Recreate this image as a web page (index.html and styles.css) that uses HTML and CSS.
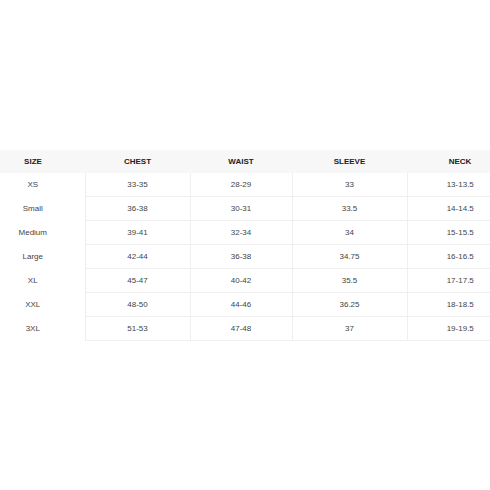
FILE: index.html
```html
<!DOCTYPE html>
<html lang="en">
<head>
<meta charset="utf-8">
<title>Size Chart</title>
<link rel="stylesheet" href="styles.css">
</head>
<body>
<div class="chart">
  <table class="sizes">
    <colgroup>
      <col class="c-size"><col class="c-chest"><col class="c-waist"><col class="c-sleeve"><col class="c-neck">
    </colgroup>
    <thead>
      <tr><th>SIZE</th><th>CHEST</th><th>WAIST</th><th>SLEEVE</th><th>NECK</th></tr>
    </thead>
    <tbody>
      <tr><td>XS</td><td>33-35</td><td>28-29</td><td>33</td><td>13-13.5</td></tr>
      <tr><td>Small</td><td>36-38</td><td>30-31</td><td>33.5</td><td>14-14.5</td></tr>
      <tr><td>Medium</td><td>39-41</td><td>32-34</td><td>34</td><td>15-15.5</td></tr>
      <tr><td>Large</td><td>42-44</td><td>36-38</td><td>34.75</td><td>16-16.5</td></tr>
      <tr><td>XL</td><td>45-47</td><td>40-42</td><td>35.5</td><td>17-17.5</td></tr>
      <tr><td>XXL</td><td>48-50</td><td>44-46</td><td>36.25</td><td>18-18.5</td></tr>
      <tr><td>3XL</td><td>51-53</td><td>47-48</td><td>37</td><td>19-19.5</td></tr>
    </tbody>
  </table>
</div>
</body>
</html>
```
FILE: styles.css
```css
html, body {
  margin: 0;
  padding: 0;
  background: #ffffff;
}
body {
  width: 490px;
  height: 490px;
  overflow: hidden;
  font-family: "Liberation Sans", Arial, sans-serif;
}
.chart {
  padding-top: 150px;
  overflow: hidden;
}
.sizes {
  border-collapse: collapse;
  table-layout: fixed;
  width: 532px;
  margin-left: -19px;
}
.c-size { width: 104px; }
.c-chest { width: 105px; }
.c-waist { width: 102px; }
.c-sleeve { width: 115px; }
.c-neck { width: 106px; }
.sizes th {
  height: 23px;
  padding: 0;
  background: #f7f7f7;
  color: #222;
  font-size: 8px;
  font-weight: bold;
  text-align: center;
  vertical-align: middle;
}
.sizes td {
  height: 23px;
  padding: 0;
  color: #444;
  font-size: 8px;
  text-align: center;
  vertical-align: middle;
}
.sizes td + td {
  border-left: 1px solid #efefef;
  border-bottom: 1px solid #efefef;
}
```
